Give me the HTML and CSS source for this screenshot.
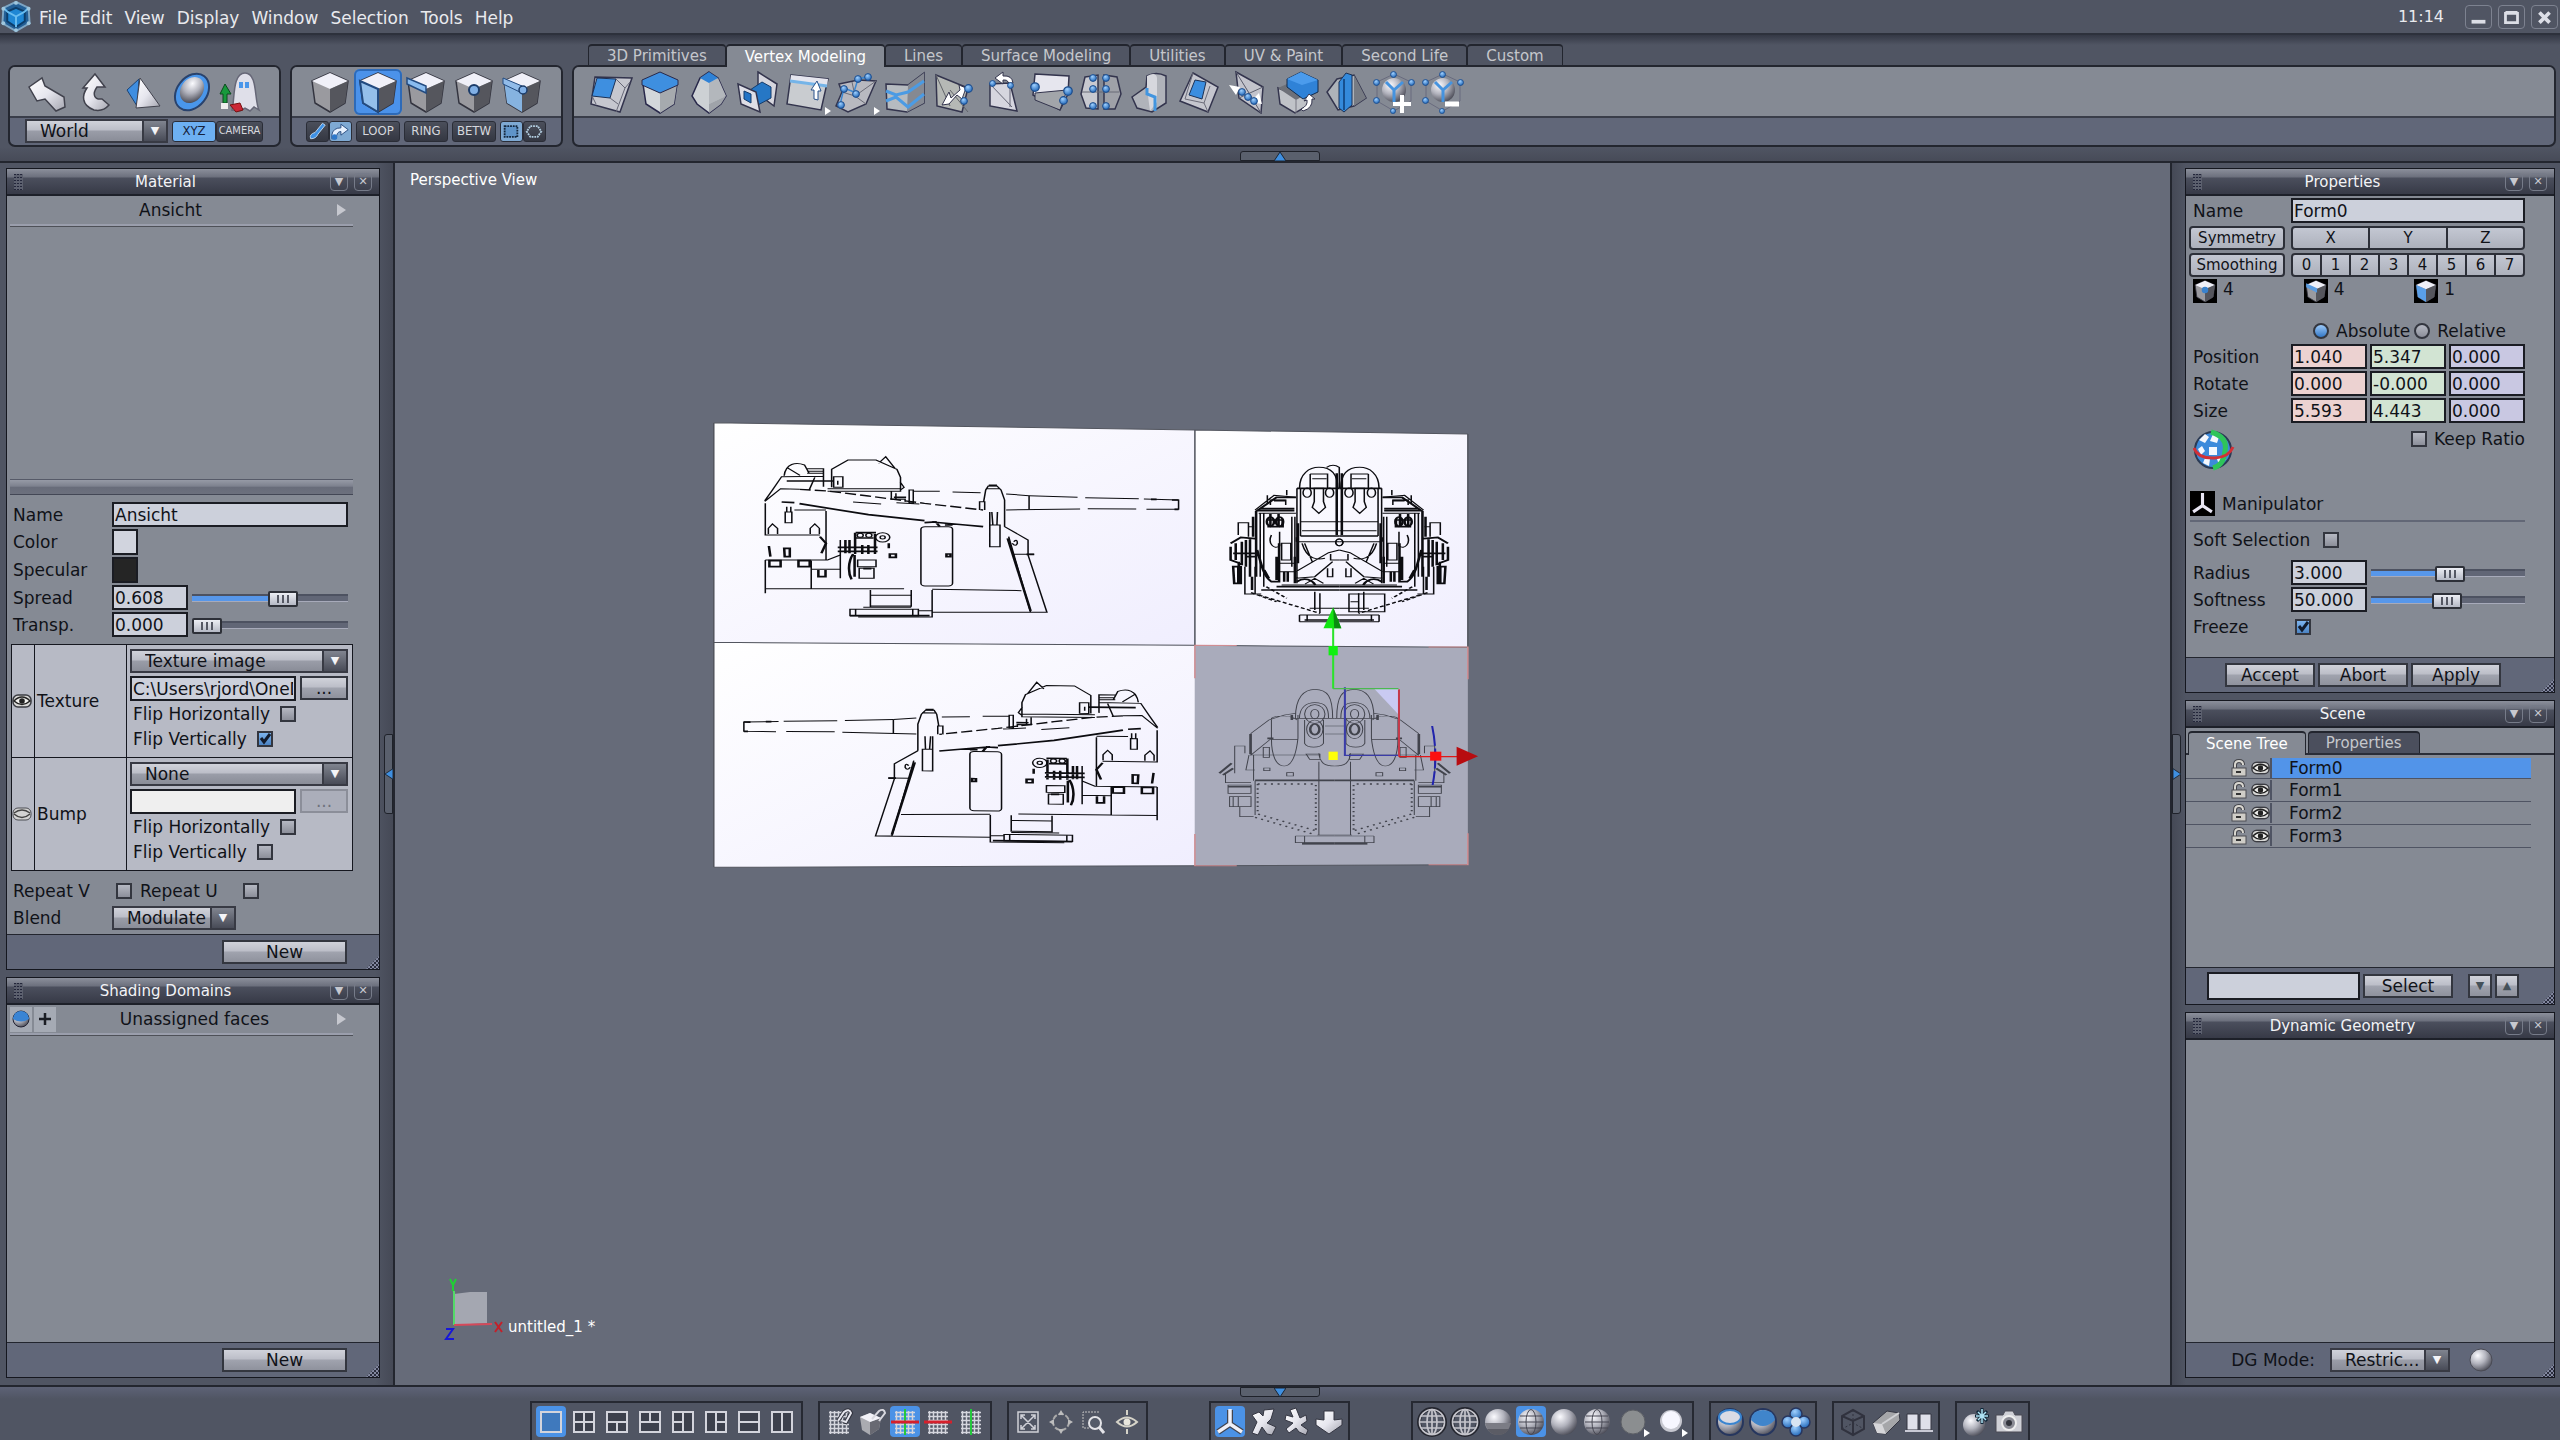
FILE: index.html
```html
<!DOCTYPE html>
<html lang="en">
<head>
  <meta charset="UTF-8" />
  <meta name="viewport" content="width=device-width, initial-scale=1.0"/>
  <title>untitled_1 *</title>
  <link rel="stylesheet" href="styles.css">
</head>

<body>

<!-- shared shapes -->
<svg class="defs" aria-hidden="true">
  <defs>
    <linearGradient id="metal" x1="0" y1="0" x2="1" y2="1"><stop offset="0" stop-color="#ffffff"/><stop offset=".5" stop-color="#e6e6ee"/><stop offset="1" stop-color="#a4a5af"/></linearGradient>
    <linearGradient id="paper" x1="0" y1="0" x2="1" y2="1"><stop offset="0" stop-color="#ffffff"/><stop offset="1" stop-color="#f0eefe"/></linearGradient>
    <radialGradient id="ball" cx=".35" cy=".3" r=".75"><stop offset="0" stop-color="#fbfbff"/><stop offset=".5" stop-color="#b2b3bd"/><stop offset="1" stop-color="#4b4c57"/></radialGradient>
    <radialGradient id="blueball" cx=".4" cy=".3" r=".75"><stop offset="0" stop-color="#9fd0ff"/><stop offset="1" stop-color="#1c63b5"/></radialGradient>

    <symbol id="cube" viewBox="0 0 44 44">
      <path d="M22 3 40 11 37 33 22 42 7 33 4 11Z" fill="#9a9a9f" stroke="#33343f" stroke-width="1.500" stroke-linejoin="round"/>
      <path d="M4 11 22 3 40 11 22 19Z" fill="#f0f0f8"/>
      <path d="M22 19 40 11 37 33 22 42Z" fill="#55565d"/>
    </symbol>
    <symbol id="node" viewBox="0 0 8 8"><circle cx="4" cy="4" r="3.400" fill="url(#blueball)" stroke="#1d4d8c"/></symbol>
    <symbol id="grid" viewBox="0 0 30 30">
      <path d="M5 5.500H25M5 9.500H25M5 13.500H25M5 17.500H25M5 21.500H25M5 25.500H25M6.500 4V27M10.500 4V27M14.500 4V27M18.500 4V27M22.500 4V27" stroke="#d4d5dd" stroke-width="1.500"/>
    </symbol>
    <symbol id="globe" viewBox="0 0 30 30">
      <circle cx="15" cy="15" r="13" fill="none" stroke="#24262f" stroke-width="4"/>
      <g fill="none" stroke="#c4c4cb" stroke-width="1.700"><circle cx="15" cy="15" r="12.500"/><ellipse cx="15" cy="15" rx="5" ry="12.500"/><path d="M15 2V28M2 15H28M4 9H26M4 21H26"/></g>
    </symbol>
    <symbol id="wires" viewBox="0 0 30 30"><g fill="none" stroke="#464752" stroke-width="1"><ellipse cx="15" cy="15" rx="5" ry="12.500"/><path d="M3 15H27M4 9H26M4 21H26"/></g></symbol>
    <symbol id="eye" viewBox="0 0 20 14">
      <rect x="1" y="1" width="18" height="12" rx="5" fill="#d7d7d5" stroke="#3b3c42" stroke-width="1.500"/>
      <path d="M2 7Q10-1 18 7Q10 14 2 7Z" fill="#f3f3f0" stroke="#222" stroke-width="1.500"/><circle cx="10" cy="7" r="2.800" fill="#222"/>
    </symbol>
    <symbol id="lock" viewBox="0 0 16 18">
      <path d="M4 9V6Q4 2 8 2Q12 2 12 6" fill="none" stroke="#44454b" stroke-width="4"/><path d="M4 9V6Q4 2 8 2Q12 2 12 6" fill="none" stroke="#d9d7d0" stroke-width="2"/>
      <rect x="1" y="9" width="14" height="8" fill="#cfcdc7" stroke="#4c4d53"/><path d="M5 13H10" stroke="#333" stroke-width="2"/>
    </symbol>

    <!-- side elevation of the turret -->
    <g id="turret-side">
      <path d="M127 272 142 240 160 200 243 199M127 274 158 236 195 238M165 197C168 160 188 155 205 165L214 190M170 172 196 196M258 232V178L290 150H345L386 178 393 202V240M350 160 364 140 382 175M210 176H242V230M210 184H242M210 190H242M262 200H280V232H262ZM225 202 214 240M250 236H393V244H250M270 212V224M375 244V268H402V275M384 250V268M392 215 400 232 393 240M410 278V240H418V278ZM418 243 470 244M495 246 550 248M600 252 645 257M645 257V298M300 276 355 282M385 278 430 282M548 300V275H558V300M556 275 560 240 565 228H582L590 240 597 270V350M560 236H588M568 306V345H588V410H568V345M572 306 574 345M583 306 582 345M597 350 643 390V435L680 607H648L605 380M612 433H655M615 395Q622 385 622 400Q618 412 612 400M128 280V375H235M247 303V450M185 300H247M167 306H180V338H167ZM170 290V306M178 290V306M134 372V355L142 342 152 355V372M216 372V355L225 342 234 355V372M128 536H400M455 538 630 542M128 450V550M128 450H250L275 435M218 478H275M218 452V536M275 390V505M334 540V590M414 540V590M334 556H414M334 588H414M455 540V607H680M294 598H428V617H294ZM305 598V617M417 598V617M320 592H414M428 602H455V621H310M312 475H341V505H312ZM309 450H345V470H309Z"/>
      <path d="M645 257 740 262M755 263 860 266M870 267 938 270V298H875M855 297 760 296M745 297 600 300"/>
      <rect x="433" y="350" width="62" height="178" rx="8"/>
      <path class="bold" d="M160 276 185 278M195 281 330 314 440 332M455 336 520 345 555 350M170 213H262M380 262H404M440 338 462 336 470 350M480 345H495M135 408 138 440M165 415H176V440H166ZM235 380 247 400 238 430M136 452H158V470H136ZM193 452H215V470H193ZM285 390V430M293 390V430M304 368V432M270 412H348M270 424H348M305 368H345M305 384H340M318 405V432M330 405V432M343 372V432M300 432C290 455 290 490 297 508M303 435V500M320 476H336M370 400V415M372 432H384V442H372ZM483 432H491V440H483ZM566 226H582M603 385 648 603M232 480V500H246V480M294 617H450M640 433H655M884 268H895M925 270H938M930 298H938"/>
      <path class="rim" d="M195 238 250 243 330 258 440 280 555 300"/>
      <circle cx="358" cy="382" r="14"/><circle cx="358" cy="382" r="5"/><circle cx="314" cy="376" r="6"/><circle cx="331" cy="376" r="6"/>
    </g>

    <!-- half of the rear elevation, mirrored -->
    <g id="rear-half">
      <path d="M1175 235C1175 190 1195 172 1213 172C1235 172 1250 190 1250 235M1196 192H1230V235M1196 192V235M1200 206H1228M1204 235H1222V275L1226 292 1213 310 1200 292 1204 275ZM1170 235V520M1177 235V378M1177 335H1253M1180 362H1253M1170 395H1253M1168 262 1125 256 1088 300M1095 310H1168M1118 285V270H1148V285M1098 310V500M1105 310V530M1160 320V470M1166 320V470M1055 375V338H1075V380M1075 350H1086M1185 400 1200 455M1180 400C1190 450 1210 450 1225 445M1168 485 1232 428 1253 420M1168 505 1205 500 1240 455M1186 522 1205 505 1222 520M1236 432V450H1253M1230 475V500H1240V475M1068 470V552H1100M1088 470V552M1140 525H1253M1215 550V610M1195 595H1253M1140 400V450H1158V400ZM1134 460H1166V485H1134ZM1120 375C1112 400 1125 420 1136 408V365M1205 545V600M1150 240V256M1112 256V280M1175 615H1253M1175 635H1253M1175 615V635M1190 615V632"/>
      <path class="bold" d="M1170 235H1253M1168 262H1130L1090 304V500M1092 302H1165M1098 296H1165M1125 272H1148M1177 378H1253M1170 382V395M1248 190V375M1040 400 1060 382 1088 386M1040 410V450L1062 462V395M1050 400V450M1070 390V470M1078 388V500M1045 430H1088M1045 470H1060V520H1047ZM1055 470V520M1068 440H1088M1092 420C1100 460 1104 500 1120 515H1135V400M1112 330H1142V350H1112M1118 312V350M1134 312V350M1130 440V510M1145 485V515M1152 485V515M1166 440V520M1130 530H1253M1100 540H1253M1170 515C1185 500 1200 510 1206 525M1185 630H1253M1084 320V380M1056 455V490M1082 500V540M1106 480 1115 505M1172 340V460"/>
      <path class="dash" d="M1095 555 1215 610M1110 530 1150 565M1080 548 1130 575"/>
      <ellipse cx="1190" cy="248" rx="8" ry="14"/><ellipse cx="1234" cy="248" rx="8" ry="14"/><ellipse class="bold" cx="1118" cy="335" rx="7" ry="14"/><ellipse class="bold" cx="1136" cy="335" rx="7" ry="14"/><ellipse cx="1253" cy="397" rx="7" ry="10"/>
    </g>

    <!-- half of the front elevation, mirrored -->
    <g id="front-half">
      <path d="M1167 925C1167 860 1185 838 1205 838C1230 838 1240 860 1240 925M1175 925C1175 890 1190 878 1205 878C1225 878 1232 890 1232 925M1185 930V1000C1190 1015 1215 1015 1222 1000V930M1167 910 1145 915 1115 930 1080 970V1035L1120 985C1120 1040 1130 1068 1145 1068C1160 1068 1168 1040 1172 985V915M1120 985V925C1130 915 1160 915 1170 930M1120 988H1172M1160 925H1244M1225 948H1244M1225 972H1244M1080 1035H1215M1085 1035V1112M1104 1012H1116V1042H1104ZM1188 1032H1215V1048H1195ZM1213 1030C1215 1060 1225 1068 1244 1068M1088 1112V1215M1213 1055V1275M1048 1090V1008H1068V1030M1076 1035 1070 1080H1088M1030 1090V1118H1080M1035 1125H1080V1150H1035ZM1038 1160H1080V1190H1038ZM1045 1160V1190M1055 1160V1190M1058 1190V1220H1085M1105 1074H1117V1082H1105ZM1150 1088H1163V1098H1150ZM1167 1278H1244M1167 1278V1298H1244M1180 1302H1244M1185 1278V1298M1210 1275H1244"/>
      <path class="bold" d="M1079 972V1033M1088 1111H1244M1018 1090 1042 1060M1025 1095 1045 1075M1035 1130H1080M1180 1301H1244M1112 985H1124M1160 915V930"/>
      <path class="dots" d="M1093 1122H1207V1262M1093 1122V1212L1207 1262M1088 1222 1205 1274"/>
      <ellipse cx="1205" cy="912" rx="20" ry="28"/><ellipse cx="1205" cy="912" rx="8" ry="14"/><ellipse cx="1205" cy="958" rx="16" ry="28"/><ellipse class="bold" cx="1205" cy="958" rx="9" ry="16"/>
    </g>
  </defs>
</svg>

<header class="menubar">
  <svg class="logo" viewBox="0 0 32 34"><path d="M16 2 29 8 30 24 16 32 2 24 3 8Z" fill="#235f96" stroke="#7ca5c4" stroke-width="2"/><path d="M16 8 25 12V22L16 28 7 22V12Z" fill="#1f87d4" stroke="#0c3d6a" stroke-width="2"/><path d="M7 12 16 17 25 12M16 17V28M3 8 7 12M29 8 25 12" stroke="#69bdf0" stroke-width="2" fill="none"/><g fill="#9fc6dd"><circle cx="16" cy="3" r="2"/><circle cx="3" cy="9" r="2"/><circle cx="29" cy="9" r="2"/><circle cx="3" cy="24" r="2"/><circle cx="29" cy="24" r="2"/><circle cx="16" cy="31" r="2"/></g></svg>
  <nav class="menu">
    <button>File</button><button>Edit</button><button>View</button><button>Display</button><button>Window</button><button>Selection</button><button>Tools</button><button>Help</button>
  </nav>
  <span class="clock">11:14</span>
  <div class="window-buttons">
    <button aria-label="Minimize"><svg viewBox="0 0 27 24"><path d="M6 17H21" stroke="#dcdee6" stroke-width="4"/></svg></button>
    <button aria-label="Maximize"><svg viewBox="0 0 27 24"><path d="M7 8H20V18H7ZM7 7H20" fill="none" stroke="#dcdee6" stroke-width="3"/></svg></button>
    <button aria-label="Close"><svg viewBox="0 0 27 24"><path d="M8 7 19 18M19 7 8 18" stroke="#dcdee6" stroke-width="4"/></svg></button>
  </div>
</header>

<section class="toolbar">
  <div class="tool-box">
    <div class="tools tools-wide">
      <button class="tool" aria-label="Select"><svg viewBox="0 0 44 44"><path d="M3 17 16 8 19 16 38 27 39 37 30 41 19 29 11 31Z" fill="url(#metal)" stroke="#41424d" stroke-width="1.500"/></svg></button>
      <button class="tool" aria-label="Rotate"><svg viewBox="0 0 44 44"><path d="M21 4 31 17H23C18 24 20 30 28 29L35 35Q29 42 20 40C7 35 8 25 13 18H9Z" fill="url(#metal)" stroke="#41424d" stroke-width="1.500"/></svg></button>
      <button class="tool" aria-label="Scale"><svg viewBox="0 0 44 44"><path d="M17 9 5 20 15 36Z" fill="#3f8ee0" stroke="#1c4374"/><path d="M18 8 38 36 14 38Z" fill="url(#metal)" stroke="#41424d"/></svg></button>
      <button class="tool" aria-label="Universal manipulator"><svg viewBox="0 0 44 44"><ellipse cx="22" cy="22" rx="15" ry="20" transform="rotate(38 22 22)" fill="#4a96ea" stroke="#29426c" stroke-width="2"/><ellipse cx="22" cy="20" rx="11" ry="14" transform="rotate(35 22 20)" fill="url(#ball)"/></svg></button>
      <button class="tool" aria-label="Ghost"><svg viewBox="0 0 44 44"><path d="M14 40C17 30 14 3 27 3C40 3 36 30 41 40L36 37 32 41 27 38 22 41Z" fill="#dfdfe9" stroke="#666777" stroke-width="1.500"/><path d="M23 12V18M29 12V18" stroke="#4a96ea" stroke-width="4"/><path d="M7 14 13 24H9V33H5V24H2Z" fill="#18993c" stroke="#0c4a1e"/><path d="M3 33H10V39H3Z" fill="#eee"/><path d="M12 35 22 33 25 40 18 42Z" fill="#cc2736" stroke="#711"/></svg></button>
    </div>
    <div class="options options-left">
      <span class="select world"><select aria-label="Coordinate system"><option>World</option></select></span>
      <span class="joined"><button class="mini on">XYZ</button><button class="mini small">CAMERA</button></span>
    </div>
  </div>

  <div class="tool-box">
    <div class="tools tools-wide">
      <button class="tool" aria-label="Object"><svg viewBox="0 0 44 44"><use href="#cube"/></svg></button>
      <button class="tool active" aria-label="Faces"><svg viewBox="0 0 44 44"><use href="#cube"/><path d="M4 11 22 19V42L7 33Z" fill="#94bfea" stroke="#234b80" stroke-width="2"/></svg></button>
      <button class="tool" aria-label="Edges"><svg viewBox="0 0 44 44"><use href="#cube"/><path d="M3 8 22 16V23L3 14Z" fill="#8abcef" stroke="#234b80" stroke-width="1.500"/></svg></button>
      <button class="tool" aria-label="Points"><svg viewBox="0 0 44 44"><use href="#cube"/><circle cx="22" cy="20" r="5" fill="#81b0e6" stroke="#1c3c69" stroke-width="2"/></svg></button>
      <button class="tool" aria-label="Auto"><svg viewBox="0 0 44 44"><use href="#cube"/><path d="M4 11 22 19V42L7 33Z" fill="#86b3e0"/><path d="M3 8 22 16V23L3 14Z" fill="#92bce9" stroke="#234b80"/><circle cx="23" cy="20" r="4" fill="#81b0e6" stroke="#1c3c69" stroke-width="1.500"/></svg></button>
    </div>
    <div class="options options-mid">
      <span class="joined"><button class="mini square" aria-label="Paint select"><svg viewBox="0 0 22 20"><path d="M4 18Q2 13 9 11L17 1 20 3 12 13Q10 18 4 18Z" fill="#3e91e6" stroke="#c2d9f1"/></svg></button><button class="mini square on" aria-label="Soft select"><svg viewBox="0 0 22 20"><path d="M2 18V14Q3 6 12 6V2L20 8 12 14V10Q7 10 7 18Z" fill="#e6f1ff" stroke="#23477a"/><circle cx="5" cy="16" r="3" fill="#2e78ca"/></svg></button></span>
      <button class="mini">LOOP</button>
      <button class="mini">RING</button>
      <button class="mini">BETW</button>
      <span class="joined"><button class="mini square on" aria-label="Rectangle"><svg viewBox="0 0 22 20"><rect x="4" y="4" width="14" height="12" fill="#5f94c9" stroke="#14273e" stroke-width="2" stroke-dasharray="2 1"/></svg></button><button class="mini square" aria-label="Lasso"><svg viewBox="0 0 22 20"><path d="M7 4H15L19 10 15 16H7L3 10Z" fill="none" stroke="#b4cfe2" stroke-width="2" stroke-dasharray="2 1"/></svg></button></span>
    </div>
  </div>

  <div class="tool-main">
    <nav class="tabs">
      <button>3D Primitives</button><button class="current">Vertex Modeling</button><button>Lines</button><button>Surface Modeling</button><button>Utilities</button><button>UV &amp; Paint</button><button>Second Life</button><button>Custom</button>
    </nav>
    <div class="tool-box">
      <div class="tools">
        <button class="tool" aria-label="Bevel face"><svg viewBox="0 0 44 44"><path d="M6 7 43 8 31 42 2 34Z" fill="#c6c7cf" stroke="#33344d" stroke-width="1.500"/><path d="M8 8 27 9 21 28 3 26Z" fill="#3e8fe0" stroke="#1b3156"/><path d="M27 9 36 18 27 42M21 28 29 34M3 26 7 34M36 18 41 12" fill="none" stroke="#666776"/></svg></button>
        <button class="tool" aria-label="Extrude"><svg viewBox="0 0 44 44"><path d="M5 14 22 22 39 14 36 34 22 43 8 34Z" fill="#d3d7da" stroke="#28284a" stroke-width="1.500"/><path d="M22 22 39 14 36 34 22 43Z" fill="#a6aaae"/><path d="M22 2 40 10V15L22 23 4 15V10Z" fill="#3e8fe0" stroke="#28284a"/></svg></button>
        <button class="tool" aria-label="Taper"><svg viewBox="0 0 44 44"><path d="M22 2 31 8 39 26 34 34 22 43 10 34 5 26 13 8Z" fill="#cdd1d4" stroke="#28284a" stroke-width="1.500"/><path d="M22 13 31 8 39 26 22 34Z" fill="#b3b7bc"/><path d="M22 34 39 26 34 34 22 43Z" fill="#9fa3a9"/><path d="M22 2 31 8 22 13 13 8Z" fill="#2f82d6"/></svg></button>
        <button class="tool" aria-label="Bridge"><svg viewBox="0 0 44 44"><path d="M22 2 41 14 38 36 22 24Z" fill="#d6d6de" stroke="#33344d" stroke-width="1.500"/><path d="M14 20 26 12 35 17V28L20 36Z" fill="#2677c5" stroke="#153c6c"/><path d="M2 14 20 22 24 42 5 34Z" fill="#dedee6" stroke="#33344d" stroke-width="1.500"/><path d="M8 21 15 24V33L8 29Z" fill="#2474c6" stroke="#153c6c"/></svg></button>
        <button class="tool flyout" aria-label="Connect"><svg viewBox="0 0 44 44"><path d="M6 5 43 9 36 40 2 34Z" fill="#c9ccd0" stroke="#33344d" stroke-width="1.500"/><path d="M6 5 43 9 42 17 5 12Z" fill="#e5e5ee"/><path d="M5 11 42 16" stroke="#75b4e8" stroke-width="3"/><path d="M29 29V20H26L32 11 36 21H33V30Z" fill="#fff" stroke="#28518b"/></svg></button>
        <button class="tool flyout" aria-label="Extract"><svg viewBox="0 0 44 44"><path d="M5 14 24 10 42 11 32 34 14 42 2 36 8 22Z" fill="#b8b9c0" stroke="#33344d" stroke-width="1.500"/><path d="M18 12 21 26 32 34M8 22 21 26 42 11" stroke="#6b6c77" fill="none"/><path d="M6 35 10 18 20 22 24 9 33 7" fill="none" stroke="#3d87d0" stroke-width="1.500"/><use href="#node" x="3" y="31" width="8" height="8"/><use href="#node" x="6" y="15" width="8" height="8"/><use href="#node" x="18" y="20" width="8" height="8"/><use href="#node" x="20" y="5" width="8" height="8"/><use href="#node" x="30" y="3" width="8" height="8"/></svg></button>
        <button class="tool" aria-label="Tessellate"><svg viewBox="0 0 44 44"><path d="M3 14 25 15 41 3V33L24 42 4 39Z" fill="#b6bbc0" stroke="#33344d" stroke-width="1.500"/><path d="M25 15 41 3V33L24 42Z" fill="#858992"/><path d="M3 21 13 25 25 22 41 11M3 31 13 27 25 37 41 24" fill="none" stroke="#4b9be4" stroke-width="3"/></svg></button>
        <button class="tool" aria-label="Smooth"><svg viewBox="0 0 44 44"><path d="M4 5 36 18 30 42 5 36Z" fill="#b5b8b5" stroke="#33344d" stroke-width="1.500"/><path d="M4 5 18 36M18 20 36 42" stroke="#61646a"/><path d="M10 35 17 22 19 28 28 20 27 15 34 18 30 29 25 25 17 34Z" fill="#fff" stroke="#33344d"/><use href="#node" x="32" y="14" width="9" height="9"/><use href="#node" x="28" y="27" width="8" height="8"/></svg></button>
        <button class="tool" aria-label="Fold"><svg viewBox="0 0 44 44"><path d="M9 14 29 13 36 41 9 36Z" fill="#d6d6df" stroke="#33344d" stroke-width="1.500"/><path d="M9 14 31 37M29 13V37" stroke="#666776"/><path d="M14 8 22 2V6Q31 5 32 13H28Q26 9 22 10V14Z" fill="#fff" stroke="#33344d"/><use href="#node" x="8" y="10" width="7" height="7"/><use href="#node" x="26" y="12" width="7" height="7"/></svg></button>
        <button class="tool" aria-label="Weld"><svg viewBox="0 0 44 44"><path d="M5 4 39 6 38 24 30 40 3 25Z" fill="#e6e6ee" stroke="#33344d" stroke-width="1.500"/><path d="M5 23 37 20 30 40 5 30Z" fill="#a2a5aa" stroke="#33344d"/><use href="#node" x="0" y="12" width="10" height="10"/><use href="#node" x="33" y="16" width="10" height="10"/><use href="#node" x="29" y="26" width="9" height="9"/></svg></button>
        <button class="tool" aria-label="Average weld"><svg viewBox="0 0 44 44"><path d="M6 7 19 5V39L7 38 2 24Z" fill="#c8c9d0" stroke="#33344d" stroke-width="1.500"/><path d="M25 5 38 7 42 24 36 39 25 39Z" fill="#9fa1a8" stroke="#33344d" stroke-width="1.500"/><path d="M3 22H40" stroke="#696a76"/><use href="#node" x="10" y="4" width="8" height="8"/><use href="#node" x="23" y="4" width="8" height="8"/><use href="#node" x="10" y="15" width="8" height="8"/><use href="#node" x="23" y="15" width="8" height="8"/><use href="#node" x="10" y="32" width="8" height="8"/><use href="#node" x="23" y="32" width="8" height="8"/></svg></button>
        <button class="tool" aria-label="Bevel"><svg viewBox="0 0 44 44"><path d="M4 27 18 17 19 6Q28 1 38 6V33L24 42 9 38Z" fill="#b0b3ba" stroke="#33344d" stroke-width="1.500"/><path d="M19 6Q28 1 29 8V32L22 41 19 18Z" fill="#d6d7dd"/><path d="M19 18V24L27 27V41" stroke="#4295df" stroke-width="3" fill="none"/></svg></button>
        <button class="tool" aria-label="Inset"><svg viewBox="0 0 44 44"><path d="M16 3 41 17 31 42 3 31Z" fill="#c5c6ce" stroke="#33344d" stroke-width="1.500"/><path d="M18 10 29 12 25 29 12 25Z" fill="#3b8ee0" stroke="#1b3156"/><path d="M33 16 27 33 8 29 16 3M27 33 31 42" fill="none" stroke="#6c6d7a"/></svg></button>
        <button class="tool" aria-label="Slide"><svg viewBox="0 0 44 44"><path d="M10 2 37 17 35 43 13 28Z" fill="#c3c4cc" stroke="#33344d" stroke-width="1.500"/><path d="M10 2 23 23 35 43M37 17 13 28" stroke="#5e6070"/><path d="M3 15 14 17 10 25ZM36 34 24 32 33 23Z" fill="#fff"/><use href="#node" x="12" y="18" width="8" height="8"/><use href="#node" x="18" y="23" width="8" height="8"/><use href="#node" x="24" y="27" width="8" height="8"/></svg></button>
        <button class="tool" aria-label="Copy face"><svg viewBox="0 0 44 44"><path d="M3 18 21 25 37 17 34 35 20 43 5 34Z" fill="#c0c3c8" stroke="#33344d" stroke-width="1.500"/><path d="M3 18 12 14 28 26 21 30Z" fill="#6d7078"/><path d="M21 30V43" stroke="#787983"/><path d="M12 9 26 2 43 10V22L28 29 12 17Z" fill="#2f82d7" stroke="#132b4c"/><path d="M12 9 27 15 43 10 26 2Z" fill="#4b9bec"/><path d="M26 39Q33 36 32 30L29 31 34 24 40 29H37Q38 38 28 41Z" fill="#fff" stroke="#33344d"/></svg></button>
        <button class="tool" aria-label="Thickness"><svg viewBox="0 0 44 44"><path d="M13 9 30 5 42 28 30 36 14 40 3 22Z" fill="#aeb3b9" stroke="#33344d" stroke-width="1.500"/><path d="M30 5 42 28 30 36Z" fill="#777b83"/><path d="M15 12 22 3 28 5V35L20 42 15 38Z" fill="#348adb" stroke="#1b3156"/><path d="M20 9V40" stroke="#16508f" stroke-width="2"/></svg></button>
        <button class="tool" aria-label="Increase smoothing"><svg viewBox="0 0 44 44"><circle cx="21" cy="20" r="12" fill="url(#ball)"/><path d="M13 12 21 20 30 12M21 20V32" fill="none" stroke="#4593df" stroke-width="3"/><path d="M21 4 38 12V31L21 41 4 31V12Z" fill="none" stroke="#696b7e"/><use href="#node" x="17" y="1" width="7" height="7"/><use href="#node" x="35" y="9" width="7" height="7"/><use href="#node" x="0" y="9" width="7" height="7"/><use href="#node" x="0" y="27" width="7" height="7"/><use href="#node" x="17" y="38" width="6" height="6"/><path d="M29 25V43M20 34H38" stroke="#fff" stroke-width="4"/></svg></button>
        <button class="tool" aria-label="Decrease smoothing"><svg viewBox="0 0 44 44"><circle cx="21" cy="20" r="12" fill="url(#ball)"/><path d="M13 12 21 20 30 12M21 20V32" fill="none" stroke="#4593df" stroke-width="3"/><path d="M21 4 38 12V31L21 41 4 31V12Z" fill="none" stroke="#696b7e"/><use href="#node" x="17" y="1" width="7" height="7"/><use href="#node" x="35" y="9" width="7" height="7"/><use href="#node" x="0" y="9" width="7" height="7"/><use href="#node" x="0" y="27" width="7" height="7"/><use href="#node" x="17" y="38" width="6" height="6"/><path d="M23 34H37" stroke="#fff" stroke-width="5"/></svg></button>
      </div>
      <div class="options"></div>
    </div>
  </div>
</section>

<div class="fold fold-top"><button class="handle" aria-label="Fold toolbar"><svg viewBox="0 0 12 9"><path d="M6 0 12 9H0Z" fill="#3f8fe0" stroke="#1b2533"/></svg></button></div>

<main class="workspace">
  <aside class="side side-left">
    <div class="panels">
      <section class="panel">
        <h2 class="title"><i class="grip"></i><span>Material</span><button aria-label="Menu">▼</button><button aria-label="Close">✕</button></h2>
        <div class="list material-list">
          <div class="list-row"><span>Ansicht</span><i class="more"></i></div>
        </div>
        <div class="splitter"></div>
        <div class="form">
          <div class="row"><label for="mat-name">Name</label><input id="mat-name" class="grow" type="text" value="Ansicht"></div>
          <div class="row tall"><span class="label">Color</span><button class="swatch light" aria-label="Color"></button></div>
          <div class="row tall"><span class="label">Specular</span><button class="swatch dark" aria-label="Specular"></button></div>
          <div class="row"><label for="spread">Spread</label><input id="spread" class="num" type="text" value="0.608"><input class="slider" type="range" aria-label="Spread" min="0" max="1000" value="600" style="--fill:60%"></div>
          <div class="row"><label for="transp">Transp.</label><input id="transp" class="num" type="text" value="0.000"><input class="slider" type="range" aria-label="Transparency" min="0" max="1000" value="0" style="--fill:0%"></div>
          <div class="maps">
            <div class="map-eye"><svg viewBox="0 0 20 14"><use href="#eye"/></svg></div>
            <div class="map-name">Texture</div>
            <div class="map-body">
              <span class="select"><select aria-label="Texture type"><option>Texture image</option></select></span>
              <div class="file"><input type="text" aria-label="Texture file" value="C:\Users\rjord\OneDrive"><button class="button">...</button></div>
              <label class="check">Flip Horizontally<input type="checkbox"></label>
              <label class="check">Flip Vertically<input type="checkbox" checked></label>
            </div>
            <div class="map-eye"><svg viewBox="0 0 20 14"><rect x="1" y="1" width="18" height="12" rx="5" fill="#d3d3d3" stroke="#4b4c52"/><path d="M2 6Q10 0 18 6M2 7Q10 14 18 7" fill="none" stroke="#444" stroke-width="1.500"/></svg></div>
            <div class="map-name">Bump</div>
            <div class="map-body">
              <span class="select"><select aria-label="Bump type"><option>None</option></select></span>
              <div class="file"><input class="blank" type="text" aria-label="Bump file"><button class="button" disabled>...</button></div>
              <label class="check">Flip Horizontally<input type="checkbox"></label>
              <label class="check">Flip Vertically<input type="checkbox"></label>
            </div>
          </div>
          <div class="row repeat"><label for="repeat-v">Repeat V</label><input id="repeat-v" type="checkbox"><label for="repeat-u">Repeat U</label><input id="repeat-u" type="checkbox"></div>
          <div class="row"><label for="blend">Blend</label><span class="select blend"><select id="blend"><option>Modulate</option></select></span></div>
        </div>
        <footer class="foot"><button class="button wide">New</button></footer>
      </section>

      <section class="panel stretch">
        <h2 class="title"><i class="grip"></i><span>Shading Domains</span><button aria-label="Menu">▼</button><button aria-label="Close">✕</button></h2>
        <div class="list grow">
          <div class="list-row"><button class="chip" aria-label="Domain"><svg viewBox="0 0 20 20"><circle cx="10" cy="10" r="8" fill="url(#ball)" stroke="#223"/><path d="M2 10A8 8 0 0 1 18 10Q10 15 2 10Z" fill="#3a84d4"/></svg></button><button class="chip" aria-label="Add domain"><svg viewBox="0 0 20 20"><path d="M10 4V16M4 10H16" stroke="#1b1d24" stroke-width="2.500"/></svg></button><span>Unassigned faces</span><i class="more"></i></div>
        </div>
        <footer class="foot"><button class="button wide">New</button></footer>
      </section>
    </div>
    <button class="handle upright" aria-label="Fold left side"><svg viewBox="0 0 9 12"><path d="M9 0V12L0 6Z" fill="#3f8fe0" stroke="#1b2533"/></svg></button>
  </aside>

  <section class="viewport">
    <span class="view-name">Perspective View</span>

    <svg class="scene" viewBox="0 0 1568 1410" preserveAspectRatio="none">
      <path d="M27 38 970 60V706L27 697Z" fill="url(#paper)"/>
      <path d="M970 60 1505 72V712L970 706Z" fill="url(#paper)"/>
      <path d="M27 697 970 706V1367L27 1372Z" fill="url(#paper)"/>
      <path d="M970 706 1505 712V1364L970 1367Z" fill="#a9abbb"/>
      <path class="edge" d="M27 38 970 60 1505 72M27 697 970 706 1505 712M27 1372 970 1367 1505 1364M27 38V1372M970 60V706M1505 72V712"/>
      <path class="picked" d="M1052 706.500 970 706V805M970 1272V1367H1052M1428 711H1505V808M1505 1270V1364H1428"/>
      <g class="ink">
        <use href="#turret-side"/>
        <use href="#turret-side" transform="matrix(-1 -.018 0 1 1024 683)"/>
        <use href="#rear-half"/>
        <use href="#rear-half" transform="translate(2506) scale(-1 1)"/>
        <path d="M1228 172Q1241 160 1253 172V235M1272 552H1342V605H1272ZM1275 575H1290"/>
      </g>
      <g class="ink faded">
        <use href="#front-half"/>
        <use href="#front-half" transform="translate(2488) scale(-1 1)"/>
      </g>
      <path d="M1322 837H1370V915Z" fill="#c9caf2"/>
      <g class="axis">
        <path d="M1264 832V1036H1370" stroke="#3b3ca8"/><path d="M1435 948Q1447 1035 1436 1125" stroke="#2224ac" stroke-dasharray="60 8"/>
        <path d="M1370 838V1040" stroke="#c43a4a"/><path d="M1370 1040H1485" stroke="#e01818"/><path d="M1241 650V836" stroke="#2be32b"/><path d="M1241 836H1369" stroke="#4bb850"/>
      </g>
      <path d="M1222 655 1241 592 1257 655Z" fill="#12e512"/><path d="M1241 592 1257 655H1243Z" fill="#0a8c10"/>
      <path d="M1232 708H1250V736H1232Z" fill="#10f010"/><path d="M1232 1025H1250V1050H1232Z" fill="#ffff08"/>
      <path d="M1431 1025H1453V1052H1431Z" fill="#fb1010"/><path d="M1483 1010 1525 1039 1483 1067Z" fill="#b80c10"/>
    </svg>

    <svg class="compass" viewBox="0 0 60 64">
      <path d="M10 17 26 15H43V46L10 48Z" fill="#a4a7b1"/>
      <path d="M10 14V48" stroke="#53da68" stroke-width="2"/><path d="M10 48 48 47" stroke="#d6495a" stroke-width="2"/>
      <path d="M6 2 9 8 12 2M9 8V14" fill="none" stroke="#20cf34" stroke-width="2"/>
      <path d="M51 45 58 55M58 45 51 55" stroke="#c3202a" stroke-width="2"/>
      <path d="M2 52H9L2 62H10" fill="none" stroke="#1717d8" stroke-width="2"/>
    </svg>
    <span class="doc-name">untitled_1 *</span>
  </section>

  <aside class="side side-right">
    <button class="handle upright" aria-label="Fold right side"><svg viewBox="0 0 9 12"><path d="M0 0V12L9 6Z" fill="#3f8fe0" stroke="#1b2533"/></svg></button>
    <div class="panels">
      <section class="panel props">
        <h2 class="title"><i class="grip"></i><span>Properties</span><button aria-label="Menu">▼</button><button aria-label="Close">✕</button></h2>
        <div class="form">
          <div class="row"><label for="obj-name">Name</label><input id="obj-name" class="grow" type="text" value="Form0"></div>
          <div class="row"><button class="flat">Symmetry</button><span class="segments"><button>X</button><button>Y</button><button>Z</button></span></div>
          <div class="row"><button class="flat">Smoothing</button><span class="segments"><button>0</button><button>1</button><button>2</button><button>3</button><button>4</button><button>5</button><button>6</button><button>7</button></span></div>
          <div class="counts">
            <span><svg viewBox="0 0 44 44"><rect width="44" height="44"/><use href="#cube"/><circle cx="22" cy="20" r="6" fill="#3a82cc"/></svg>4</span>
            <span><svg viewBox="0 0 44 44"><rect width="44" height="44"/><use href="#cube"/><path d="M4 8 24 17V25L4 15Z" fill="#5b9ce0"/></svg>4</span>
            <span><svg viewBox="0 0 44 44"><rect width="44" height="44"/><use href="#cube"/><path d="M4 11 22 19V42L7 33Z" fill="#5a9fe8"/></svg>1</span>
          </div>
          <div class="modes"><label><input type="radio" name="mode" checked>Absolute</label><label><input type="radio" name="mode">Relative</label></div>
          <div class="row xyz"><span class="label">Position</span><input class="num x" type="text" aria-label="Position X" value="1.040"><input class="num y" type="text" aria-label="Position Y" value="5.347"><input class="num z" type="text" aria-label="Position Z" value="0.000"></div>
          <div class="row xyz"><span class="label">Rotate</span><input class="num x" type="text" aria-label="Rotate X" value="0.000"><input class="num y" type="text" aria-label="Rotate Y" value="-0.000"><input class="num z" type="text" aria-label="Rotate Z" value="0.000"></div>
          <div class="row xyz"><span class="label">Size</span><input class="num x" type="text" aria-label="Size X" value="5.593"><input class="num y" type="text" aria-label="Size Y" value="4.443"><input class="num z" type="text" aria-label="Size Z" value="0.000"></div>
          <div class="ratio">
            <svg viewBox="0 0 42 42"><circle cx="20" cy="21" r="18" fill="#3c8adb" stroke="#2b3b55" stroke-width="2"/><path d="M6 11 12 5 16 8 12 14ZM20 5 26 8 24 14 17 12ZM5 20 9 17 12 22 8 26ZM16 18H24V26H16ZM12 29 17 30 16 37 10 34ZM24 30 30 26 33 30 26 36Z" fill="#f4f7fd"/><path d="M18 3Q35 8 32 22Q31 36 20 39" fill="none" stroke="#2fc45a" stroke-width="5"/><path d="M1 19Q5 30 22 29Q36 28 40 18" fill="none" stroke="#d23036" stroke-width="3"/></svg>
            <label><input type="checkbox">Keep Ratio</label>
          </div>
          <div class="manipulator"><svg viewBox="0 0 24 24"><rect width="24" height="24"/><path d="M12 2V14M12 14 3 20M12 14 21 20" stroke="#e9e6f4" stroke-width="3"/></svg>Manipulator</div>
          <div class="row soft"><label for="soft">Soft Selection</label><input id="soft" type="checkbox"></div>
          <div class="row"><label for="radius">Radius</label><input id="radius" class="num" type="text" value="3.000"><input class="slider" type="range" aria-label="Radius" min="0" max="100" value="52" style="--fill:50%"></div>
          <div class="row"><label for="softness">Softness</label><input id="softness" class="num" type="text" value="50.000"><input class="slider" type="range" aria-label="Softness" min="0" max="100" value="49" style="--fill:50%"></div>
          <div class="row freeze"><label for="freeze">Freeze</label><input id="freeze" type="checkbox" checked></div>
        </div>
        <footer class="foot center"><button class="button">Accept</button><button class="button">Abort</button><button class="button">Apply</button></footer>
      </section>

      <section class="panel tree">
        <h2 class="title"><i class="grip"></i><span>Scene</span><button aria-label="Menu">▼</button><button aria-label="Close">✕</button></h2>
        <nav class="tabs"><button class="current">Scene Tree</button><button>Properties</button></nav>
        <ul class="objects">
          <li class="selected"><svg viewBox="0 0 16 18"><use href="#lock"/></svg><svg viewBox="0 0 20 14"><use href="#eye"/></svg><span>Form0</span></li>
          <li><svg viewBox="0 0 16 18"><use href="#lock"/></svg><svg viewBox="0 0 20 14"><use href="#eye"/></svg><span>Form1</span></li>
          <li><svg viewBox="0 0 16 18"><use href="#lock"/></svg><svg viewBox="0 0 20 14"><use href="#eye"/></svg><span>Form2</span></li>
          <li><svg viewBox="0 0 16 18"><use href="#lock"/></svg><svg viewBox="0 0 20 14"><use href="#eye"/></svg><span>Form3</span></li>
        </ul>
        <footer class="foot center"><input class="find" type="text" aria-label="Object name"><button class="button">Select</button><button class="button step" aria-label="Next">▼</button><button class="button step last" aria-label="Previous">▲</button></footer>
      </section>

      <section class="panel stretch">
        <h2 class="title"><i class="grip"></i><span>Dynamic Geometry</span><button aria-label="Menu">▼</button><button aria-label="Close">✕</button></h2>
        <div class="grow"></div>
        <footer class="foot dg"><label for="dg">DG Mode:</label><span class="select"><select id="dg"><option>Restric...</option></select></span><svg viewBox="0 0 24 24"><circle cx="12" cy="12" r="11" fill="url(#ball)" stroke="#4a4b55"/></svg></footer>
      </section>
    </div>
  </aside>
</main>

<footer class="bottombar">
  <button class="handle" aria-label="Fold bottom bar"><svg viewBox="0 0 12 9"><path d="M0 0H12L6 9Z" fill="#3f8fe0" stroke="#1b2533"/></svg></button>
  <div class="docks">
    <div class="cluster">
      <div class="dock layouts">
        <button class="on" aria-label="Single view"><svg viewBox="0 0 30 30"><path d="M5 5H25V25H5Z"/></svg></button>
        <button aria-label="Four views"><svg viewBox="0 0 30 30"><path d="M5 5H25V25H5ZM15 5V25M5 15H25"/></svg></button>
        <button aria-label="One over two"><svg viewBox="0 0 30 30"><path d="M5 5H25V25H5ZM5 15H25M15 15V25"/></svg></button>
        <button aria-label="Two over one"><svg viewBox="0 0 30 30"><path d="M5 5H25V25H5ZM5 15H25M15 5V15"/></svg></button>
        <button aria-label="Two left, one right"><svg viewBox="0 0 30 30"><path d="M5 5H25V25H5ZM15 5V25M5 15H15"/></svg></button>
        <button aria-label="One left, two right"><svg viewBox="0 0 30 30"><path d="M5 5H25V25H5ZM15 5V25M15 15H25"/></svg></button>
        <button aria-label="Stacked"><svg viewBox="0 0 30 30"><path d="M5 5H25V25H5ZM5 15H25"/></svg></button>
        <button aria-label="Side by side"><svg viewBox="0 0 30 30"><path d="M5 5H25V25H5ZM15 5V25"/></svg></button>
      </div>
      <div class="dock">
        <button aria-label="Snap to grid"><svg viewBox="0 0 30 30"><use href="#grid"/><path d="M14 14 20 5Q25 1 27 6L22 15 19 14" fill="none" stroke="#31333e" stroke-width="4"/><path d="M14 14 20 5Q25 1 27 6L22 15 19 14" fill="none" stroke="#e6e6ee" stroke-width="2"/></svg></button>
        <button aria-label="Snap to object"><svg viewBox="0 0 30 30"><path d="M3 10 13 6 24 11 22 22 13 28 5 23Z" fill="#aaabb1"/><path d="M13 15 24 11 22 22 13 28Z" fill="#686972"/><path d="M3 10 13 6 24 11 13 15Z" fill="#f2f2f8"/><path d="M15 12 22 4Q27 1 28 6L22 14" fill="none" stroke="#d8d8df" stroke-width="2"/></svg></button>
        <button class="on" aria-label="Both axes"><svg viewBox="0 0 30 30"><use href="#grid"/><path d="M15 2V28" stroke="#24c93c" stroke-width="2"/><path d="M1 15H29" stroke="#d5202c" stroke-width="3"/></svg></button>
        <button aria-label="Horizontal axis"><svg viewBox="0 0 30 30"><use href="#grid"/><path d="M1 15H29" stroke="#d5202c" stroke-width="3"/></svg></button>
        <button aria-label="Vertical axis"><svg viewBox="0 0 30 30"><use href="#grid"/><path d="M15 2V28" stroke="#24c93c" stroke-width="2"/></svg></button>
      </div>
      <div class="dock">
        <button aria-label="Fit all"><svg viewBox="0 0 30 30"><path d="M5 5H25V25H5ZM8 8 22 22M22 8 8 22M8 12V8H12M18 8H22V12M22 18V22H18M12 22H8V18" fill="none" stroke="#d0d1d8" stroke-width="1.500"/></svg></button>
        <button aria-label="Center"><svg viewBox="0 0 30 30"><circle cx="15" cy="15" r="8" fill="none" stroke="#a9a9a9" stroke-width="2" stroke-dasharray="5 2"/><path d="M15 3 18 8H12ZM15 27 18 22H12ZM3 15 8 12V18ZM27 15 22 12V18Z" fill="#bdbdbd"/></svg></button>
        <button aria-label="Zoom area"><svg viewBox="0 0 30 30"><path d="M20 5H4V21H10" fill="none" stroke="#c3c3c3" stroke-dasharray="2 1"/><circle cx="16" cy="16" r="6" fill="#555b69" stroke="#e4e4e8" stroke-width="2"/><path d="M20 20 25 26" stroke="#e4e4e8" stroke-width="3"/></svg></button>
        <button aria-label="Look at"><svg viewBox="0 0 30 30"><path d="M5 15Q15 6 25 15Q15 24 5 15ZM15 3V8M15 22V27" fill="none" stroke="#d5d3c8" stroke-width="2"/><circle cx="15" cy="15" r="3.500" fill="#e9e7dd"/></svg></button>
      </div>
    </div>

    <div class="cluster">
      <div class="dock">
        <button class="on" aria-label="Manipulator"><svg viewBox="0 0 30 30"><path d="M15 3V17M15 17 3 25M15 17 27 25" stroke="#42444f" stroke-width="6"/><path d="M15 2V17M15 17 3 25M15 17 27 25" stroke="#f0f0f7" stroke-width="3.500"/></svg></button>
        <button aria-label="Move"><svg viewBox="0 0 30 30"><path d="M4 8 11 5 15 9 16 3 26 2 23 12 19 16 28 20 24 28 19 27 14 20 10 28 4 26 9 15Z" fill="url(#metal)" stroke="#343642"/></svg></button>
        <button aria-label="Turn"><svg viewBox="0 0 30 30"><path d="M9 3 15 1 19 11 25 8 26 14 20 18 27 23 25 28 18 25 15 21 8 26 5 22 12 16 4 13 5 8 12 10Z" fill="url(#metal)" stroke="#343642"/></svg></button>
        <button aria-label="Drop"><svg viewBox="0 0 30 30"><path d="M10 4H20V13L28 12V18L15 27 2 18V12L10 13Z" fill="url(#metal)" stroke="#343642"/></svg></button>
      </div>
    </div>

    <div class="cluster">
      <div class="dock">
        <button aria-label="Wireframe"><svg viewBox="0 0 30 30"><use href="#globe"/></svg></button>
        <button aria-label="Hidden line"><svg viewBox="0 0 30 30"><use href="#globe"/></svg></button>
        <button aria-label="Flat"><svg viewBox="0 0 30 30"><circle cx="15" cy="15" r="13" fill="url(#ball)"/><path d="M2 16H28Q25 28 15 28Q5 28 2 16Z" fill="#7b7c85"/><path d="M4 22H26Q22 28 15 28Q8 28 4 22Z" fill="#5b5c65"/></svg></button>
        <button class="on" aria-label="Flat wires"><svg viewBox="0 0 30 30"><circle cx="15" cy="15" r="13" fill="url(#ball)"/><use href="#wires"/></svg></button>
        <button aria-label="Smooth"><svg viewBox="0 0 30 30"><circle cx="15" cy="15" r="13" fill="url(#ball)"/></svg></button>
        <button aria-label="Smooth wires"><svg viewBox="0 0 30 30"><circle cx="15" cy="15" r="13" fill="url(#ball)"/><use href="#wires"/></svg></button>
        <button class="flyout" aria-label="Transparency"><svg viewBox="0 0 30 30"><circle cx="15" cy="15" r="12" fill="#8b8e90" stroke="#5d6066"/></svg></button>
        <button class="flyout" aria-label="Lights"><svg viewBox="0 0 30 30"><circle cx="15" cy="14" r="11" fill="#c6c7cf"/><circle cx="15" cy="13" r="9" fill="#f7f7ff"/></svg></button>
      </div>
      <div class="dock">
        <button aria-label="Open surface"><svg viewBox="0 0 30 30"><circle cx="15" cy="15" r="13" fill="url(#ball)" stroke="#26365e" stroke-width="2"/><ellipse cx="15" cy="10" rx="11" ry="7" fill="#dadbe4" stroke="#3a85d0" stroke-width="2"/></svg></button>
        <button aria-label="Closed surface"><svg viewBox="0 0 30 30"><circle cx="15" cy="15" r="13" fill="url(#ball)" stroke="#26365e" stroke-width="2"/><path d="M3 13Q4 3 15 3Q26 3 27 13Q15 25 3 13Z" fill="#4085cb"/></svg></button>
        <button aria-label="Patches"><svg viewBox="0 0 30 30"><g fill="url(#blueball)" stroke="#27365e" stroke-width="1.500"><circle cx="15" cy="7" r="6"/><circle cx="7" cy="15" r="6"/><circle cx="23" cy="15" r="6"/><circle cx="15" cy="23" r="6"/></g><circle cx="15" cy="15" r="5" fill="#d8e4f2"/></svg></button>
      </div>
      <div class="dock">
        <button aria-label="Bounding box"><svg viewBox="0 0 30 30"><path d="M15 3 26 9V22L15 28 4 22V9ZM4 9 15 14 26 9M15 14V28" fill="none" stroke="#30323e" stroke-width="2"/><path d="M4 22 15 16 26 22M15 3V16" fill="none" stroke="#30323e" stroke-dasharray="2 2"/></svg></button>
        <button aria-label="Backfaces"><svg viewBox="0 0 30 30"><path d="M2 16 16 4 28 6 29 13 15 27 6 26Z" fill="#a5a6a9" stroke="#343642"/><path d="M2 16 11 17 15 27 6 26Z" fill="#d6d6d9"/><path d="M11 17 28 6" stroke="#d0d1d5" stroke-width="2"/></svg></button>
        <button aria-label="Pages"><svg viewBox="0 0 30 30"><path d="M3 7H14V23H3ZM16 7H27V23H16Z" fill="#dfe0ea" stroke="#343642"/><path d="M1 24H29" stroke="#c9cad5" stroke-width="2"/></svg></button>
      </div>
      <div class="dock">
        <button aria-label="Render"><svg viewBox="0 0 30 30"><circle cx="13" cy="18" r="11" fill="url(#ball)"/><path d="M21 1V17M14 9H28M16 4 26 14M26 4 16 14" stroke="#0f2638" stroke-width="3"/><path d="M21 2V16M15 9H27M17 5 25 13M25 5 17 13" stroke="#aee3f4" stroke-width="1.500"/></svg></button>
        <button aria-label="Snapshot"><svg viewBox="0 0 30 30"><path d="M2 8H9L11 4H19L21 8H28V25H2Z" fill="#cfd0d6" stroke="#4a4b55"/><circle cx="15" cy="16" r="7" fill="#8a8b94" stroke="#eee" stroke-width="2"/><circle cx="15" cy="16" r="3" fill="#32343c"/></svg></button>
      </div>
    </div>
  </div>
</footer>

</body>
</html>
```
FILE: styles.css
```css
* {
  box-sizing: border-box;
}

body {
  margin: 0;
  height: 100vh;
  display: flex;
  flex-direction: column;
  overflow: hidden;
  background: #505563;
  color: #101218;
  font: 17px/20px "DejaVu Sans", sans-serif;
}

button, input, select {
  margin: 0;
  padding: 0;
  border: none;
  border-radius: 0;
  background: none;
  color: inherit;
  font: inherit;
}

svg {
  display: block;
}

.defs {
  position: absolute;
  width: 0;
  height: 0;
}

.grow {
  flex: 1;
  min-width: 0;
}

/* menu bar */

.menubar {
  display: flex;
  align-items: center;
  height: 35px;
  flex: none;
  border-bottom: 2px solid #2d313c;
  color: #e9eaee;
}

.logo {
  width: 32px;
  height: 33px;
}

.menu {
  display: flex;
  flex: 1;
  gap: 12px;
  padding: 2px 0 0 7px;
}

.clock {
  font-size: 16px;
  padding-right: 21px;
}

.window-buttons {
  display: flex;
  gap: 6px;
  padding-right: 2px;
}

.window-buttons button {
  width: 27px;
  height: 24px;
  border: 1px solid #7d8290;
  border-radius: 4px;
}

/* tool bar */

.toolbar {
  display: flex;
  align-items: flex-end;
  gap: 9px;
  height: 112px;
  flex: none;
  padding: 0 4px 0 8px;
  background: linear-gradient(#343845, #505563 10px);
}

.tool-box {
  height: 82px;
  border: 2px solid #23262f;
  border-radius: 7px;
  background: #616779;
  overflow: hidden;
}

.tool-main {
  flex: 1;
}

.tools {
  display: flex;
  align-items: center;
  height: 51px;
  padding: 0 12px;
  border-bottom: 2px solid #393d49;
  background: #858a94;
}

.tools-wide {
  padding: 0 15px 0 14px;
}

.tool {
  width: 49px;
  height: 46px;
  border-radius: 6px;
}

.tool svg {
  width: 44px;
  height: 44px;
  margin: auto;
}

.tools-wide .tool {
  width: 48px;
}

.tool.active {
  background: #4b92ea;
  box-shadow: inset 0 0 0 2px #2d6ab8;
}

.tool.flyout, .dock .flyout {
  position: relative;
}

.flyout::after {
  content: "";
  position: absolute;
  right: 0;
  bottom: 0;
  border: 4px solid transparent;
  border-left: 6px solid #fff;
  border-right: none;
}

.options {
  display: flex;
  align-items: center;
  height: 26px;
  gap: 4px;
}

.options-left {
  padding-left: 15px;
}

.options-mid {
  padding-left: 14px;
}

.joined {
  display: flex;
}

.mini {
  width: 44px;
  height: 21px;
  border: 1px solid #2a2d37;
  border-radius: 3px;
  background: linear-gradient(#4b4f5b, #343742);
  color: #d6d8de;
  font: 13px/16px "DejaVu Sans Condensed", "DejaVu Sans", sans-serif;
}

.mini.small {
  width: 47px;
  font-size: 11px;
}

.mini.square {
  width: 23px;
}

.mini.on {
  background: #6db0f2;
  color: #16213a;
}

.square.on {
  background: #7ea9d3;
}

.square svg {
  width: 20px;
  height: 19px;
}

.world {
  width: 143px;
}

.tabs {
  display: flex;
  padding-left: 16px;
}

.tabs button {
  height: 21px;
  padding: 0 18px;
  border: 1px solid #22252e;
  border-width: 2px 1px 0;
  border-radius: 4px 4px 0 0;
  color: #c5c7cc;
  font-size: 15px;
  line-height: 18px;
}

.tabs .current {
  background: #858a94;
  color: #fff;
}

.tool-main .tabs .current {
  position: relative;
  height: 23px;
  margin-bottom: -2px;
}

/* fold handles */

.fold-top {
  display: flex;
  justify-content: center;
  align-items: flex-end;
  height: 16px;
  flex: none;
  border-bottom: 2px solid #23262f;
  background: linear-gradient(#505563, #474b58);
}

.handle {
  width: 80px;
  height: 10px;
  border: 1px solid #1f222a;
  border-radius: 3px 3px 0 0;
  background: #5a606d;
}

.handle svg {
  width: 12px;
  height: 9px;
  margin: auto;
}

.handle.upright {
  align-self: center;
  width: 9px;
  height: 80px;
  border-radius: 3px 0 0 3px;
}

.upright svg {
  width: 8px;
  height: 12px;
}

/* side columns */

.workspace {
  display: flex;
  flex: 1;
  min-height: 0;
}

.side {
  display: flex;
  justify-content: space-between;
  flex: none;
}

.side-left {
  width: 395px;
  padding-left: 6px;
  border-right: 2px solid #23262f;
  background: linear-gradient(90deg, #505563 375px, #454956);
}

.side-right {
  width: 390px;
  padding-right: 5px;
  border-left: 2px solid #23262f;
  background: linear-gradient(90deg, #454956, #505563 14px);
}

.side-right .upright {
  border-radius: 0 3px 3px 0;
}

.panels {
  display: flex;
  flex-direction: column;
  gap: 7px;
  width: 374px;
  padding: 5px 0 7px;
}

.side-right .panels {
  width: 370px;
}

.panel {
  display: flex;
  flex-direction: column;
  flex: none;
  border: 1px solid #15171f;
  background: #858a94;
}

.panel.stretch {
  flex: 1;
  min-height: 0;
}

.props {
  height: 525px;
}

.tree {
  height: 305px;
}

.title {
  display: flex;
  align-items: center;
  gap: 6px;
  height: 27px;
  flex: none;
  margin: 0;
  padding: 0 7px;
  border-bottom: 2px solid #1d2029;
  background: linear-gradient(#8b8f9b, #6c707d 8px, #4b4f5d 9px, #373a47);
  color: #f2f3f6;
  font-size: 15px;
  font-weight: normal;
}

.title span {
  flex: 1;
  padding-right: 22px;
  text-align: center;
}

.title button {
  width: 18px;
  height: 18px;
  border: 1px solid #767b89;
  border-radius: 4px;
  color: #c6c8cf;
  font-size: 11px;
  line-height: 14px;
}

.grip {
  width: 9px;
  height: 16px;
  background: repeating-linear-gradient(#0000 0 1px, #5c606e 1px 3px), repeating-linear-gradient(90deg, #23263a 0 2px, #5c606e 2px 3px);
}

.list {
  padding: 0 26px 0 3px;
}

.material-list {
  height: 283px;
}

.list-row {
  display: flex;
  align-items: center;
  height: 31px;
  padding-right: 7px;
  border-bottom: 3px ridge #9a9eac;
}

.list-row span {
  flex: 1;
  padding-right: 6px;
  text-align: center;
}

.more {
  border: 6px solid transparent;
  border-left: 9px solid #c6c8cf;
  border-right: none;
}

.chip {
  width: 22px;
  height: 25px;
  margin-right: 2px;
  background: #a5aab4;
}

.chip svg {
  width: 20px;
  height: 20px;
  margin: auto;
}

.splitter {
  height: 16px;
  margin: 0 26px 0 3px;
  border-top: 1px solid #565a68;
  border-bottom: 1px solid #434755;
  background: linear-gradient(#969aa6, #7d818e 45%, #686c7a 50%, #6c707d);
}

/* forms */

.form {
  flex: 1;
  padding: 6px 31px 3px 6px;
}

.row {
  display: flex;
  align-items: center;
  height: 27px;
}

.row.tall {
  height: 28px;
}

.row > label, .label {
  width: 99px;
}

input[type="text"] {
  height: 25px;
  padding: 0 1px;
  border: 2px solid #1a1c23;
  background: #ccd0db;
}

input.blank {
  background: #efefef;
}

input.num {
  width: 76px;
}

.num.x {
  background: #ecd2d1;
}

.num.y {
  background: #d2e4d3;
}

.num.z {
  background: #c9c8e2;
}

input[type="checkbox"], input[type="radio"] {
  appearance: none;
  width: 16px;
  height: 16px;
  border: 2px solid #33363f;
  background: linear-gradient(#b5b8c2, #8c8f9a);
}

input[type="radio"] {
  border-radius: 50%;
}

input[type="radio"]:checked {
  background: linear-gradient(#9cc9f8, #3478c6);
}

input[type="checkbox"]:checked {
  background: url("data:image/svg+xml,%3Csvg xmlns='http://www.w3.org/2000/svg' viewBox='0 0 12 12'%3E%3Cpath d='M2 5 5 9 11 1' fill='none' stroke='%23121b2c' stroke-width='3'/%3E%3C/svg%3E"), linear-gradient(#7db4ee, #4c84c4);
}

.swatch {
  width: 26px;
  height: 26px;
  border: 2px solid #1a1c23;
}

.light {
  background: #d1d4de;
}

.dark {
  background: #252525;
}

.slider {
  appearance: none;
  flex: 1;
  min-width: 0;
  height: 16px;
  margin-left: 4px;
}

.slider::-webkit-slider-runnable-track {
  height: 8px;
  border-top: 2px solid #4d5261;
  border-bottom: 1px solid #a7aaba;
  background: linear-gradient(90deg, #5797ea var(--fill), #616676 var(--fill));
}

.slider::-webkit-slider-thumb {
  appearance: none;
  width: 30px;
  height: 16px;
  margin-top: -5px;
  border: 2px solid #2d3038;
  border-radius: 2px;
  background:
    linear-gradient(90deg, #555864 2px, #0000 2px 5px, #555864 5px 7px, #0000 7px 10px, #555864 10px 12px) center / 12px 8px no-repeat,
    linear-gradient(#eceef4, #b5b9c5);
}

.select {
  position: relative;
  display: block;
  height: 24px;
}

.select select {
  appearance: none;
  display: block;
  width: 100%;
  height: 24px;
  padding: 0 24px 0 13px;
  border: 2px solid #383a44;
  background: linear-gradient(#d0d2da, #bcbec8 45%, #9a9da8 50%, #8a8d98);
}

.select::after {
  content: "▼";
  position: absolute;
  top: 2px;
  right: 2px;
  width: 22px;
  height: 20px;
  border-left: 2px solid #383a44;
  background: linear-gradient(#80848f, #484b57);
  color: #f4f4f7;
  font-size: 11px;
  text-align: center;
  pointer-events: none;
}

.button {
  width: 90px;
  height: 24px;
  border: 2px solid #33363f;
  background: linear-gradient(#d0d2da, #bcbec8 45%, #a0a3ae 50%, #8f929d);
}

.button:disabled {
  border-color: #8b8e99;
  background: #abaeba;
  color: #6f727d;
}

.button.wide {
  width: 125px;
}

.maps {
  display: grid;
  grid-template-columns: 22px 91px minmax(0, 1fr);
  gap: 1px;
  margin: 6px -5px 6px -2px;
  padding: 1px;
  background: #15171f;
}

.maps > div {
  background: #b7bac5;
}

.map-eye, .map-name {
  display: flex;
  align-items: center;
}

.map-eye svg {
  width: 20px;
  height: 14px;
}

.map-name {
  padding-left: 2px;
}

.map-body {
  height: 112px;
  padding: 4px 4px 0 3px;
}

.file {
  display: flex;
  gap: 4px;
  margin: 3px 0 0;
}

.file input {
  flex: 1;
  min-width: 0;
}

.file .button {
  width: 48px;
  line-height: 12px;
}

.check {
  display: flex;
  align-items: center;
  gap: 10px;
  height: 25px;
  padding-left: 3px;
}

.repeat > label + input {
  margin: 0 8px 0 4px;
}

.blend {
  width: 124px;
}

.foot {
  position: relative;
  display: flex;
  align-items: center;
  justify-content: flex-end;
  gap: 3px;
  height: 35px;
  flex: none;
  padding-right: 32px;
  border-top: 1px solid #22252e;
  background: #616779;
}

.foot::after {
  content: "";
  position: absolute;
  right: 0;
  bottom: 0;
  width: 13px;
  height: 13px;
  background: repeating-conic-gradient(#2b2e3e 0 25%, #8388a0 0 50%) 0 0 / 4px 4px;
  clip-path: polygon(100% 0, 100% 100%, 0 100%);
}

.foot.center {
  justify-content: center;
  padding-right: 14px;
}

/* properties */

.props .form {
  padding: 1px 29px 0 7px;
}

.props .row > label, .props .label {
  width: 98px;
}

.flat {
  width: 96px;
  height: 24px;
  margin: 0 6px 0 -4px;
  border: 2px solid #2c2f38;
  border-radius: 4px;
  background: linear-gradient(#c3c7d2, #adb1bc);
  font-size: 15px;
  line-height: 18px;
}

.segments {
  display: flex;
  flex: 1;
  height: 24px;
  border: 2px solid #2c2f38;
  border-radius: 4px;
  background: linear-gradient(#c3c7d2, #adb1bc);
}

.segments button {
  flex: 1;
  font-size: 15px;
  line-height: 18px;
}

.segments button + button {
  border-left: 2px solid #2c2f38;
}

.counts {
  display: flex;
  padding-top: 1px;
}

.counts span {
  display: flex;
  gap: 6px;
  width: 111px;
}

.counts svg {
  width: 24px;
  height: 24px;
}

.modes {
  display: flex;
  gap: 4px;
  padding: 16px 0 0 120px;
}

.modes label {
  display: flex;
  align-items: center;
  gap: 7px;
  height: 24px;
}

.xyz {
  gap: 3px;
}

.xyz .label {
  margin-right: -3px;
}

.ratio {
  display: flex;
  justify-content: space-between;
  align-items: flex-start;
  padding-top: 5px;
}

.ratio svg {
  width: 42px;
  height: 42px;
}

.ratio label {
  display: flex;
  align-items: center;
  gap: 7px;
}

.manipulator {
  display: flex;
  align-items: center;
  gap: 7px;
  margin: 20px 0 4px -3px;
  padding-bottom: 4px;
  border-bottom: 2px solid #626776;
}

.manipulator svg {
  width: 25px;
  height: 25px;
}

.props .soft {
  margin-bottom: 6px;
}

.props .soft label {
  width: 130px;
}

.freeze input {
  margin-left: 4px;
}

/* scene tree */

.tree .tabs {
  padding: 3px 0 0 2px;
  gap: 2px;
  border-bottom: 2px solid #2a2d37;
}

.tree .tabs button {
  height: 22px;
  padding: 0 17px;
  background: #4b4f5d;
}

.tree .tabs .current {
  margin-bottom: -2px;
  height: 24px;
  background: #858a94;
}

.objects {
  flex: 1;
  margin: 0;
  padding: 2px 23px 0 0;
  list-style: none;
}

.objects li {
  display: flex;
  align-items: center;
  gap: 4px;
  height: 22px;
  padding-left: 45px;
  border-bottom: 1px solid #4f5463;
}

.objects li + li {
  height: 23px;
}

.objects svg {
  width: 16px;
  height: 18px;
}

.objects svg + svg {
  width: 19px;
  height: 16px;
  margin-right: -4px;
}

.objects span {
  flex: 1;
  padding-left: 17px;
  border-left: 2px solid #4f5463;
}

.objects .selected span {
  background: #5294e9;
}

.tree .foot {
  height: 37px;
}

input.find {
  width: 153px;
  height: 28px;
}

.step {
  width: 24px;
  margin-left: 12px;
  color: #45515a;
  font-size: 11px;
  line-height: 16px;
}

.step.last {
  margin-left: 0;
}

.foot.dg {
  gap: 15px;
  padding-right: 61px;
}

.dg .select {
  width: 120px;
}

.dg svg {
  width: 24px;
  height: 24px;
  margin-left: 4px;
}

/* viewport: items sit freely on the canvas */

.viewport {
  position: relative;
  flex: 1;
  min-width: 0;
  background: #666b79;
  color: #fff;
  font-size: 15px;
}

.view-name {
  position: absolute;
  left: 15px;
  top: 7px;
}

.scene {
  position: absolute;
  left: 305px;
  top: 247px;
  width: 800px;
  height: 470px;
}

.compass {
  position: absolute;
  left: 49px;
  top: 1114px;
  width: 60px;
  height: 64px;
}

.doc-name {
  position: absolute;
  left: 113px;
  top: 1154px;
}

.ink {
  fill: none;
  stroke: #0c0c10;
  stroke-width: 3;
}

.faded {
  stroke: #41434c;
  stroke-width: 2;
}

.bold {
  stroke-width: 5;
}

.dash {
  stroke-width: 4;
  stroke-dasharray: 8 5;
}

.rim {
  stroke-width: 4;
  stroke-dasharray: 22 8;
}

.dots {
  stroke-width: 4;
  stroke-dasharray: 4 9;
}

.edge, .picked {
  fill: none;
  stroke: #53565f;
  stroke-width: 3;
}

.picked {
  stroke: #d08d92;
}

.axis {
  fill: none;
  stroke-width: 4;
}

/* bottom bar */

.bottombar {
  height: 55px;
  flex: none;
  border-top: 2px solid #23262f;
  background: linear-gradient(#5d6276, #505563 12px);
}

.bottombar .handle {
  display: block;
  margin: 0 auto 4px;
  border-radius: 0 0 3px 3px;
}

.docks {
  display: flex;
  justify-content: center;
  gap: 61px;
}

.cluster {
  display: flex;
  gap: 15px;
}

.dock {
  display: flex;
  gap: 3px;
  height: 44px;
  padding: 3px 4px 0;
  border: 2px solid #262932;
}

.dock button {
  width: 30px;
  height: 31px;
  border-radius: 4px;
}

.dock svg {
  width: 30px;
  height: 30px;
  margin: auto;
}

.dock .on {
  background: #4b92e6;
}

.dock .flyout {
  width: 35px;
}

.layouts path {
  fill: #3c404c;
  stroke: #d3d4dc;
  stroke-width: 2;
}

.layouts .on path {
  fill: #3f79bd;
}
```
